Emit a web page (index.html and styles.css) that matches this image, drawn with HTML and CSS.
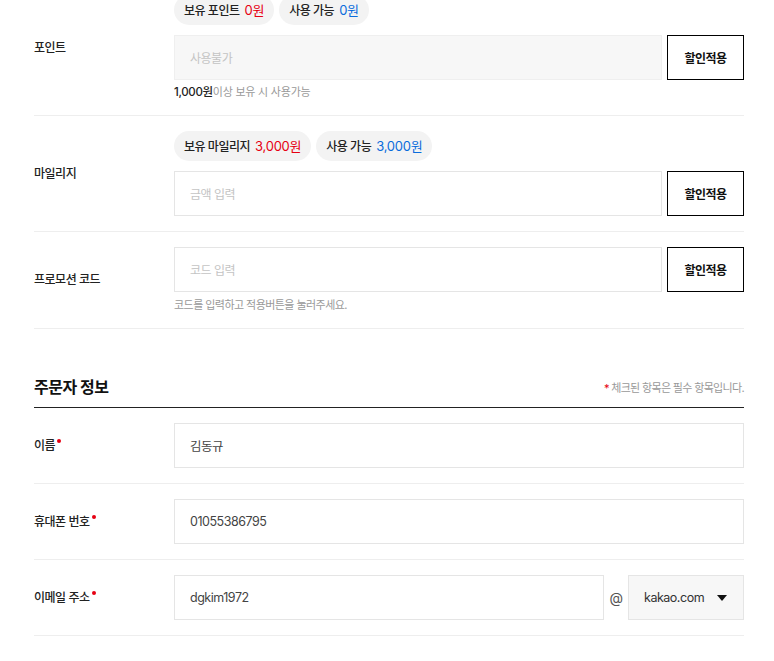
FILE: index.html
```html
<!DOCTYPE html>
<html lang="ko">
<head>
<meta charset="utf-8">
<link rel="stylesheet" href="styles.css">
</head>
<body>
<div class="page">
  <div class="row">
    <div class="label">포인트</div>
    <div class="field">
      <div class="chips">
        <span class="chip">보유 포인트<em class="red">0원</em></span>
        <span class="chip">사용 가능<em class="blue">0원</em></span>
      </div>
      <div class="inline">
        <div class="input disabled"><span class="ph">사용불가</span></div>
        <button class="btn">할인적용</button>
      </div>
      <p class="help first"><b>1,000원</b>이상 보유 시 사용가능</p>
    </div>
  </div>
  <div class="row">
    <div class="label">마일리지</div>
    <div class="field">
      <div class="chips">
        <span class="chip">보유 마일리지<em class="red">3,000원</em></span>
        <span class="chip">사용 가능<em class="blue">3,000원</em></span>
      </div>
      <div class="inline">
        <div class="input"><span class="ph">금액 입력</span></div>
        <button class="btn">할인적용</button>
      </div>
    </div>
  </div>
  <div class="row">
    <div class="label">프로모션 코드</div>
    <div class="field">
      <div class="inline">
        <div class="input"><span class="ph">코드 입력</span></div>
        <button class="btn">할인적용</button>
      </div>
      <p class="help">코드를 입력하고 적용버튼을 눌러주세요.</p>
    </div>
  </div>

  <div class="section-head">
    <h2>주문자 정보</h2>
    <p class="note"><span class="star">*</span> 체크된 항목은 필수 항목입니다.</p>
  </div>
  <div class="row">
    <div class="label req">이름</div>
    <div class="field">
      <div class="input"><span class="val">김동규</span></div>
    </div>
  </div>
  <div class="row">
    <div class="label req">휴대폰 번호</div>
    <div class="field">
      <div class="input"><span class="val">01055386795</span></div>
    </div>
  </div>
  <div class="row">
    <div class="label req">이메일 주소</div>
    <div class="field">
      <div class="email">
        <div class="input"><span class="val">dgkim1972</span></div>
        <span class="at">@</span>
        <div class="select"><span class="val">kakao.com</span><span class="caret"></span></div>
      </div>
    </div>
  </div>
</div>
</body>
</html>
```
FILE: styles.css
```css
* { box-sizing: border-box; }
html, body { margin: 0; padding: 0; background: #fff; }
body {
  font-family: Inter, "Noto Sans CJK KR", sans-serif;
  color: #222;
  font-size: 12px;
  letter-spacing: -0.04em;
}
.page {
  width: 710px;
  margin: -20px 0 0 34px;
}
.row {
  display: grid;
  grid-template-columns: 140px 1fr;
  align-items: center;
  padding: 15px 0;
  border-bottom: 1px solid #eeeeee;
}
.label {
  font-size: 12px;
  font-weight: 500;
  color: #222;
  line-height: 18px;
}
.label.req::after {
  content: "";
  display: inline-block;
  width: 4px;
  height: 4px;
  border-radius: 50%;
  background: #e60012;
  vertical-align: top;
  margin-left: 2px;
  margin-top: 2px;
}
.field { display: flex; flex-direction: column; }
.chips { display: flex; gap: 5px; margin-bottom: 10px; }
.chip {
  height: 30px;
  line-height: 30px;
  padding: 0 10px;
  border-radius: 15px;
  background: #f3f3f3;
  font-weight: 500;
  font-size: 12px;
  color: #222;
}
.chip em {
  font-style: normal;
  font-weight: 400;
  margin-left: 5px;
  font-size: 13px;
  letter-spacing: -0.02em;
}
.red { color: #e60012; }
.blue { color: #0a6cdc; }
.inline { display: flex; gap: 5px; }
.input {
  height: 45px;
  border: 1px solid #e5e5e5;
  background: #fff;
  display: flex;
  align-items: center;
  padding: 0 15px;
}
.inline .input { flex: 1; }
.input.disabled { background: #f7f7f7; border-color: #efefef; }
.ph { color: #c4c4c4; font-size: 12px; }
.val { color: #444; font-size: 12.5px; }
.btn {
  width: 77px;
  height: 45px;
  border: 1px solid #000;
  background: #fff;
  font-family: inherit;
  font-size: 12px;
  font-weight: 700;
  color: #111;
  letter-spacing: -0.04em;
  padding: 0;
}
.help {
  margin: 5px 0 0;
  line-height: 16px;
  font-size: 11px;
  color: #999;
  letter-spacing: -0.05em;
}
.help.first { margin-top: 4px; letter-spacing: -0.02em; }
.help b { color: #222; font-weight: 500; font-size: 11.5px; letter-spacing: -0.03em; }
.section-head {
  margin-top: 47px;
  padding-bottom: 9px;
  border-bottom: 1px solid #222;
  display: flex;
  justify-content: space-between;
  align-items: center;
}
.section-head h2 {
  margin: 0;
  font-size: 16px;
  line-height: 22px;
  font-weight: 700;
  color: #111;
}
.note {
  margin: 0;
  font-size: 11px;
  color: #999;
  letter-spacing: -0.06em;
}
.star { color: #e60012; }
.email { display: flex; align-items: center; }
.email .input { flex: 0 0 430px; }
.at {
  width: 24px;
  text-align: center;
  color: #555;
  font-size: 14px;
}
.select {
  flex: 1;
  height: 45px;
  border: 1px solid #e5e5e5;
  background: #f7f7f7;
  display: flex;
  align-items: center;
  justify-content: space-between;
  padding: 0 16px 0 15px;
}
.select .val { color: #333; font-size: 12.5px; }
.caret {
  width: 0;
  height: 0;
  border-left: 5px solid transparent;
  border-right: 5px solid transparent;
  border-top: 6px solid #111;
}
```
